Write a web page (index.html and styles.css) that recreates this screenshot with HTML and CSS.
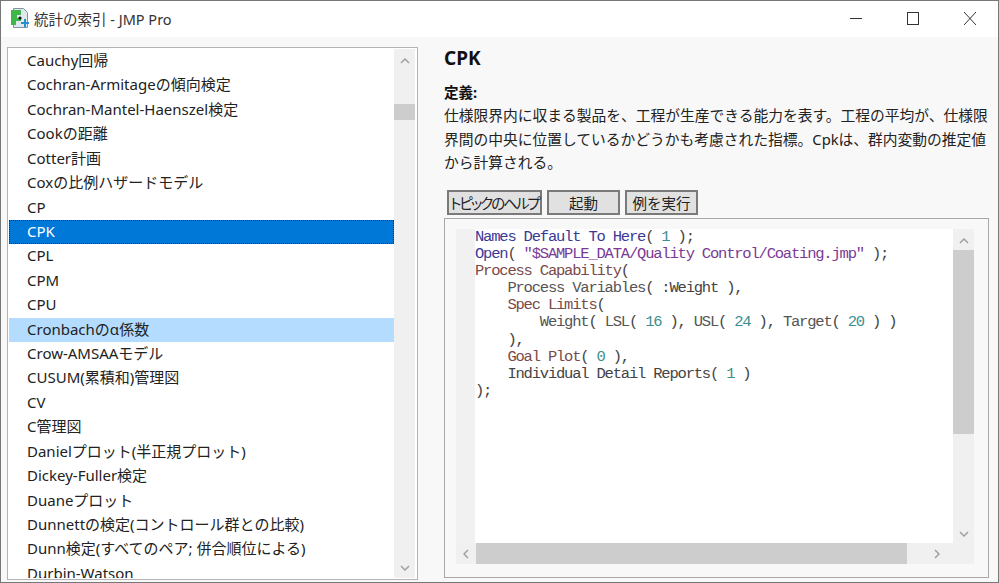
FILE: index.html
```html
<!DOCTYPE html>
<html lang="ja">
<head>
<meta charset="utf-8">
<title>統計の索引 - JMP Pro</title>
<link rel="stylesheet" href="styles.css">
</head>
<body>
<div class="window">
  <header class="titlebar">
    <svg class="app-icon" width="20" height="22" viewBox="0 0 20 22">
      <path d="M3.500 1.500h10l4 4v15h-14z" fill="#dfe8ee" stroke="#7f94a4"/>
      <path d="M1 3h10v5H7v3h4v3H6v4H1z" fill="#3fb54a"/>
      <circle cx="10" cy="11" r="1.600" fill="#111"/>
      <path d="M15 12v8M11 16h8" stroke="#2a8fd0" stroke-width="2"/>
    </svg>
    <span class="title">統計の索引 - JMP Pro</span>
    <div class="controls">
      <svg width="12" height="14" viewBox="0 0 12 14"><path d="M0 6.500h12" stroke="#333" fill="none"/></svg>
      <svg width="12" height="14" viewBox="0 0 12 14"><rect x="0.500" y="0.500" width="11" height="12" stroke="#333" fill="none"/></svg>
      <svg width="12" height="14" viewBox="0 0 12 14"><path d="M0 0l12 13M12 0L0 13" stroke="#333" fill="none"/></svg>
    </div>
  </header>
  <main class="body">
    <section class="listbox">
      <ul class="list">
        <li>Cauchy回帰</li>
        <li>Cochran-Armitageの傾向検定</li>
        <li>Cochran-Mantel-Haenszel検定</li>
        <li>Cookの距離</li>
        <li>Cotter計画</li>
        <li>Coxの比例ハザードモデル</li>
        <li>CP</li>
        <li class="selected">CPK</li>
        <li>CPL</li>
        <li>CPM</li>
        <li>CPU</li>
        <li class="hover">Cronbachのα係数</li>
        <li>Crow-AMSAAモデル</li>
        <li>CUSUM(累積和)管理図</li>
        <li>CV</li>
        <li>C管理図</li>
        <li>Danielプロット(半正規プロット)</li>
        <li>Dickey-Fuller検定</li>
        <li>Duaneプロット</li>
        <li>Dunnettの検定(コントロール群との比較)</li>
        <li>Dunn検定(すべてのペア; 併合順位による)</li>
        <li>Durbin-Watson</li>
      </ul>
      <div class="vscroll list-scroll">
        <svg class="arrow" width="10" height="6" viewBox="0 0 10 6"><path d="M1 5l4-4 4 4" fill="none" stroke="#a0a0a0" stroke-width="1.500"/></svg>
        <div class="thumb-slot"><div class="thumb"></div></div>
        <svg class="arrow" width="10" height="6" viewBox="0 0 10 6"><path d="M1 1l4 4 4-4" fill="none" stroke="#a0a0a0" stroke-width="1.500"/></svg>
      </div>
    </section>
    <section class="detail">
      <h1>CPK</h1>
      <h2>定義:</h2>
      <p>仕様限界内に収まる製品を、工程が生産できる能力を表す。工程の平均が、仕様限界間の中央に位置しているかどうかも考慮された指標。Cpkは、群内変動の推定値から計算される。</p>
      <div class="buttons">
        <button class="btn wide">トピックのヘルプ</button>
        <button class="btn start">起動</button>
        <button class="btn run">例を実行</button>
      </div>
      <div class="codebox">
        <div class="code-grid">
          <div class="gutter"></div>
          <pre class="code"><span class="fn">Names Default To Here</span>( <span class="num">1</span> );
<span class="fn">Open</span>( <span class="str">"$SAMPLE_DATA/Quality Control/Coating.jmp"</span> );
<span class="pf">Process Capability</span>(
    <span class="arg">Process Variables</span>( :Weight ),
    <span class="pf">Spec Limits</span>(
        <span class="arg">Weight</span>( <span class="arg">LSL</span>( <span class="num">16</span> ), <span class="arg">USL</span>( <span class="num">24</span> ), <span class="arg">Target</span>( <span class="num">20</span> ) )
    ),
    <span class="pf">Goal Plot</span>( <span class="num">0</span> ),
    Individual Detail Reports( <span class="num">1</span> )
);</pre>
          <div class="vscroll code-v">
            <svg class="arrow" width="10" height="6" viewBox="0 0 10 6"><path d="M1 5l4-4 4 4" fill="none" stroke="#a0a0a0" stroke-width="1.500"/></svg>
            <div class="code-thumb-slot"><div class="code-thumb"></div></div>
            <svg class="arrow" width="10" height="6" viewBox="0 0 10 6"><path d="M1 1l4 4 4-4" fill="none" stroke="#a0a0a0" stroke-width="1.500"/></svg>
          </div>
          <div class="hscroll">
            <svg class="harrow" width="6" height="10" viewBox="0 0 6 10"><path d="M5 1L1 5l4 4" fill="none" stroke="#a0a0a0" stroke-width="1.500"/></svg>
            <div class="hthumb"></div>
            <svg class="harrow" width="6" height="10" viewBox="0 0 6 10"><path d="M1 1l4 4-4 4" fill="none" stroke="#a0a0a0" stroke-width="1.500"/></svg>
          </div>
        </div>
      </div>
    </section>
  </main>
</div>
</body>
</html>
```
FILE: styles.css
```css
* { box-sizing: border-box; }
html, body { margin: 0; padding: 0; }
body {
  width: 999px;
  height: 583px;
  overflow: hidden;
  font-family: "Noto Sans", "Noto Sans CJK JP", sans-serif;
  color: #1a1a1a;
}
.window {
  width: 999px;
  height: 583px;
  display: flex;
  flex-direction: column;
  border: 1px solid #777;
  background: #f8f8f9;
}
.titlebar {
  height: 36px;
  flex: none;
  display: flex;
  align-items: center;
  background: #fff;
  padding: 0 0 2px 9px;
}
.app-icon { flex: none; }
.title {
  margin-left: 4px;
  font-size: 14.500px;
  color: #333;
}
.controls {
  margin-left: auto;
  display: flex;
  gap: 45px;
  padding: 2px 22px 0 0;
}
.body {
  flex: 1;
  min-height: 0;
  display: flex;
  padding: 10px 9px 2px 6px;
}
.listbox {
  width: 411px;
  flex: none;
  display: flex;
  background: #fff;
  border: 1px solid #b4b4b4;
  padding: 1px 2px 1px 1px;
  overflow: hidden;
}
.list {
  list-style: none;
  margin: 0;
  padding: 0;
  flex: 1;
  min-width: 0;
  overflow: hidden;
}
.list li {
  height: 24.430px;
  line-height: 22px;
  padding-left: 18px;
  font-size: 15px;
  white-space: nowrap;
  color: #222;
}
.list .selected { background: #0078d7; color: #fff; outline: 1px dotted #003f78; outline-offset: -1px; }
.list .hover { background: #b4dcff; }
.vscroll {
  flex: none;
  width: 21px;
  background: #f0f0f0;
  display: flex;
  flex-direction: column;
  align-items: center;
  padding: 9px 0 7px;
}
.arrow { flex: none; }
.thumb-slot {
  flex: 1;
  align-self: stretch;
  padding-top: 40px;
}
.thumb { height: 16px; background: #cdcdcd; }
.detail {
  flex: 1;
  min-width: 0;
  padding: 0 0 2px 26px;
  display: flex;
  flex-direction: column;
}
.detail h1 {
  margin: 0;
  font-size: 19px;
  line-height: 22px;
  font-weight: 700;
  color: #111;
}
.detail h2 {
  margin: 12px 0 0;
  font-size: 14.500px;
  line-height: 22px;
  font-weight: 700;
  color: #111;
}
.detail p {
  margin: 1px 0 0;
  font-size: 14.750px;
  line-height: 23.500px;
  color: #222;
  width: 546px;
  height: 70px;
}
.buttons {
  display: flex;
  gap: 5px;
  margin: 16px 0 3px 3px;
}
.btn {
  height: 25px;
  padding: 0;
  background: #e1e1e1;
  border: 2px solid #7a7a7a;
  font: 14.500px "Noto Sans CJK JP", sans-serif;
  line-height: 20px;
  color: #222;
  white-space: nowrap;
  overflow: visible;
}
.wide { width: 95px; font-feature-settings: "palt"; letter-spacing: -2px; }
.start { width: 73px; }
.run { width: 73px; }
.codebox {
  flex: 1;
  min-height: 0;
  border: 1px solid #a8a8a8;
  padding: 10px 14px 13px 11px;
}
.code-grid {
  height: 100%;
  display: grid;
  grid-template-columns: 19px 1fr 21px;
  grid-template-rows: 1fr 21px;
}
.gutter { background: #f1f1f1; }
.code {
  margin: 0;
  background: #fff;
  overflow: hidden;
  font-family: "Liberation Mono", monospace;
  font-size: 15.500px;
  letter-spacing: -1.200px;
  line-height: 17.100px;
  color: #444;
}
.fn { color: #3a3a96; }
.str { color: #7a3a96; }
.pf { color: #7a4a4a; }
.arg { color: #555; }
.num { color: #3a9090; }
.code-v {
  grid-column: 3;
  grid-row: 1 / span 2;
  padding: 9px 0 27px;
}
.code-thumb-slot { flex: 1; align-self: stretch; padding-top: 6px; }
.code-thumb { height: 184px; background: #cdcdcd; }
.hscroll {
  grid-column: 1 / span 2;
  grid-row: 2;
  display: flex;
  align-items: center;
  background: #f0f0f0;
}
.harrow { flex: none; margin: 0 7px; }
.hthumb { width: 431px; align-self: stretch; background: #cdcdcd; }
.hscroll .harrow:last-child { margin-left: 27px; }
```
